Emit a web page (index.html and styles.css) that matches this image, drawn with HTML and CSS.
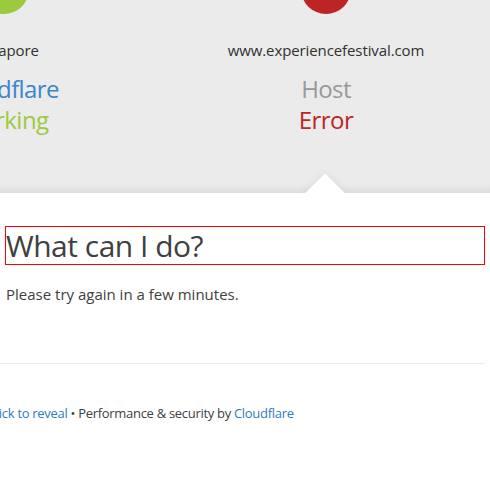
FILE: index.html
```html
<!DOCTYPE html>
<html>
<head>
<meta charset="utf-8">
<link rel="stylesheet" href="styles.css">
</head>
<body>
<section class="overview">
  <div class="cols">
    <div class="col">
      <div class="dot dot-ok"></div>
      <div class="loc">Singapore</div>
      <div class="name name-cf">Cloudflare</div>
      <div class="status status-ok">Working</div>
    </div>
    <div class="col">
      <div class="dot dot-err"></div>
      <div class="loc">www.experiencefestival.com</div>
      <div class="name">Host</div>
      <div class="status status-err">Error</div>
    </div>
  </div>
  <div class="pointer"></div>
</section>
<section class="details">
  <h2 class="title">What can I do?</h2>
  <p class="text">Please try again in a few minutes.</p>
</section>
<hr class="rule">
<footer class="footer">
  <p class="foot-line"><a class="link">Click to reveal</a> • Performance &amp; security by <a class="link">Cloudflare</a></p>
</footer>
</body>
</html>
```
FILE: styles.css
```css
html, body {
  margin: 0;
  padding: 0;
  background: #fff;
  overflow: hidden;
}
body {
  font-family: "Open Sans", "Noto Sans", sans-serif;
  color: #404040;
  width: 490px;
}
.overview {
  position: relative;
  height: 193px;
  background: #ebebeb;
  box-shadow: inset 0 -10px 10px -8px rgba(0,0,0,0.09);
  overflow: hidden;
}
.cols {
  display: flex;
  margin-left: -157px;
}
.col {
  width: 322px;
  flex: none;
  text-align: center;
}
.dot {
  width: 50px;
  height: 50px;
  border-radius: 50%;
  margin: -36px auto 0;
}
.dot-ok { background: #9bca3e; }
.dot-err { background: #bd2426; }
.loc {
  margin-top: 25px;
  font-size: 15px;
  line-height: 22px;
  color: #313131;
  letter-spacing: -0.1px;
}
.name {
  margin-top: 12px;
  font-size: 24px;
  line-height: 31px;
  color: #999;
  letter-spacing: -0.6px;
}
.name-cf { color: #3d85c9; }
.status {
  font-size: 24px;
  line-height: 31px;
  letter-spacing: -0.5px;
}
.status-ok { color: #9bca3e; }
.status-err { color: #bd2426; }
.pointer {
  position: absolute;
  left: 311px;
  top: 179px;
  width: 28px;
  height: 28px;
  background: #fff;
  transform: rotate(45deg);
  box-shadow: 0 0 8px rgba(0,0,0,0.08);
}
.details {
  padding: 33px 5px 0;
}
.title {
  margin: 0;
  border: 1px solid #f00;
  font-size: 30px;
  font-weight: 400;
  line-height: 37px;
  color: #404040;
  letter-spacing: -0.5px;
}
.text {
  margin: 18px 0 0 1px;
  font-size: 15px;
  line-height: 22px;
  letter-spacing: 0;
}
.rule {
  margin: 58px 5px 0 0;
  border: 0;
  border-top: 1px solid #ebebeb;
}
.footer {
  padding-top: 39px;
}
.foot-line {
  margin: 0 0 0 -12px;
  white-space: nowrap;
  font-size: 13px;
  line-height: 20px;
  color: #404040;
  letter-spacing: -0.3px;
}
.link {
  color: #2f7bbf;
  text-decoration: none;
}
```
